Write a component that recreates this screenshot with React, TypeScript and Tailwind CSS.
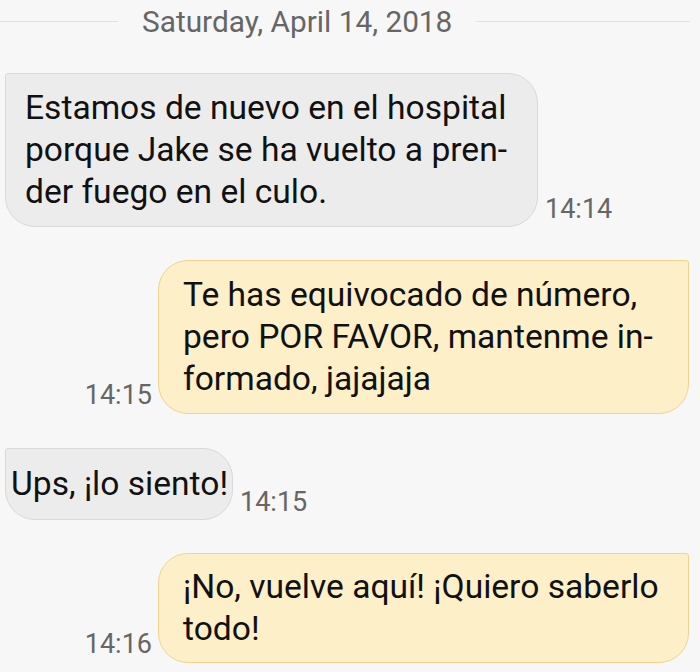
import React from 'react'

type Msg = {
  lines: string[]
  time: string
  sent?: boolean
}

const font = { fontFamily: 'Roboto, "Noto Sans", sans-serif' }

function Received({ lines, time, width, pad }: Msg & { width: string; pad: string }) {
  return (
    <div className="flex items-end">
      <div
        className={`${width} ${pad} ml-[5px] box-border border border-[#d9d9d9] bg-[#ececec] rounded-tl-[3px] rounded-tr-[30px] rounded-br-[30px] rounded-bl-[30px] text-[33.6px] leading-[42px] text-[#111] whitespace-nowrap`}
      >
        {lines.map((l) => (
          <div key={l}>{l}</div>
        ))}
      </div>
      <div className="ml-[7px] mb-[4px] text-[27px] leading-[27px] text-[#666]">{time}</div>
    </div>
  )
}

function Sent({ lines, time, pad }: Msg & { pad: string }) {
  return (
    <div className="flex items-end justify-end pr-[11px]">
      <div className="mr-[6px] mb-[5px] text-[27px] leading-[27px] text-[#666]">{time}</div>
      <div
        className={`w-[531px] ${pad} box-border border border-[#f0d48e] bg-[#fdefc8] rounded-tl-[30px] rounded-tr-[3px] rounded-br-[30px] rounded-bl-[30px] text-[33.6px] leading-[42px] text-[#111] whitespace-nowrap`}
      >
        {lines.map((l) => (
          <div key={l}>{l}</div>
        ))}
      </div>
    </div>
  )
}

export default function App() {
  return (
    <div className="w-[700px] h-[672px] overflow-hidden bg-[#f7f7f7]" style={font}>
      <div className="flex items-center pt-[7px] pr-[10px]">
        <div className="w-[118px] h-px bg-[#e2e2e2]" />
        <div className="px-[24px] text-[29.8px] leading-[29px] text-[#666]">Saturday, April 14, 2018</div>
        <div className="flex-1 h-px bg-[#e2e2e2]" />
      </div>

      <div className="mt-[37px]">
        <Received
          width="w-[533px]"
          pad="pl-[19px] py-[13px]"
          lines={['Estamos de nuevo en el hospital', 'porque Jake se ha vuelto a pren-', 'der fuego en el culo.']}
          time="14:14"
        />
      </div>

      <div className="mt-[33px]">
        <Sent
          pad="pl-[24px] py-[13px]"
          lines={['Te has equivocado de número,', 'pero POR FAVOR, mantenme in-', 'formado, jajajaja']}
          time="14:15"
        />
      </div>

      <div className="mt-[34px]">
        <Received width="w-[228px]" pad="pl-[5px] py-[14px]" lines={['Ups, ¡lo siento!']} time="14:15" />
      </div>

      <div className="mt-[33px]">
        <Sent
          pad="pl-[24px] py-[12px]"
          lines={['¡No, vuelve aquí! ¡Quiero saberlo', 'todo!']}
          time="14:16"
        />
      </div>
    </div>
  )
}
